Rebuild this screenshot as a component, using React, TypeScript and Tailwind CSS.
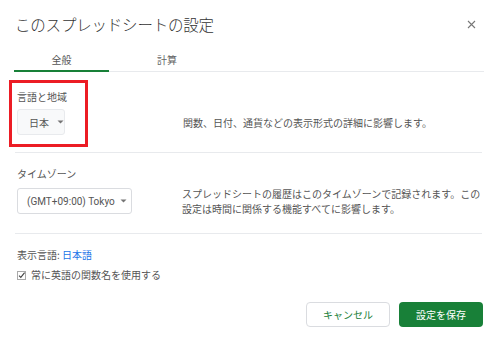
import React from "react";

const font = { fontFamily: '"Noto Sans CJK JP", Roboto, sans-serif' };

function Caret() {
  return (
    <svg width="7" height="4" viewBox="0 0 7 4" className="shrink-0">
      <path d="M0.5 0.5 L6.5 0.5 L3.5 3.5 Z" fill="#757575" />
    </svg>
  );
}

export default function App() {
  return (
    <div
      className="relative w-[497px] h-[339px] bg-white flex flex-col text-[#444] overflow-hidden"
      style={font}
    >
      {/* header */}
      <div className="h-[48px] flex items-center justify-between pl-[15px] pr-[21px]">
        <div className="text-[15.5px] leading-[20px] text-[#333] font-light tracking-[-0.2px]">
          このスプレッドシートの設定
        </div>
        <svg width="9" height="9" viewBox="0 0 9 9">
          <path d="M1 1 L8 8 M8 1 L1 8" stroke="#777" strokeWidth="1.1" />
        </svg>
      </div>

      {/* tabs */}
      <div className="mx-[14px] w-[470px] flex border-b border-[#e8eaed] h-[24px]">
        <div className="w-[95px] flex items-center justify-center text-[10px] text-[#555] border-b-2 border-[#188038] -mb-px">
          全般
        </div>
        <div className="w-[116px] flex items-center justify-center text-[10px] text-[#666]">
          計算
        </div>
      </div>

      {/* section 1 */}
      <div className="mx-[15px] w-[467px] pl-[2px] pt-[18px] pb-[17px] border-b border-[#e8eaed] flex flex-col gap-[5px]">
        <div className="text-[10px] leading-[14px] text-[#555]">言語と地域</div>
        <div className="flex items-center">
          <div className="w-[165px] shrink-0">
            <div className="w-[48px] h-[26px] rounded-[3px] border border-[#e8eaed] bg-[#f8f9fa] flex items-center pl-[11px] gap-[8px] text-[10px] text-[#555]">
              <span>日本</span>
              <Caret />
            </div>
          </div>
          <div className="text-[10px] leading-[15px] text-[#555] pl-[1px]">
            関数、日付、通貨などの表示形式の詳細に影響します。
          </div>
        </div>
      </div>

      {/* section 2 */}
      <div className="mx-[15px] w-[467px] pl-[2px] pt-[14px] pb-[17px] border-b border-[#e8eaed] flex flex-col gap-[5px]">
        <div className="text-[10px] leading-[14px] text-[#555]">タイムゾーン</div>
        <div className="flex items-center">
          <div className="w-[165px] shrink-0">
            <div
              className="w-[115px] h-[26px] rounded-[3px] border border-[#dadce0] bg-white flex items-center pl-[9px] gap-[5px] text-[10px] text-[#555] whitespace-nowrap"
              style={{ fontFamily: 'Roboto, "Noto Sans CJK JP", sans-serif' }}
            >
              <span>(GMT+09:00) Tokyo</span>
              <Caret />
            </div>
          </div>
          <div className="w-[302px] text-[10px] leading-[15px] text-[#555]">
            スプレッドシートの履歴はこのタイムゾーンで記録されます。この設定は時間に関係する機能すべてに影響します。
          </div>
        </div>
      </div>

      {/* footer */}
      <div className="mx-[15px] w-[468px] pl-[2px] pt-[14px] flex flex-col">
        <div className="text-[10px] leading-[14px] text-[#555]">
          表示言語: <span className="text-[#1a73e8]">日本語</span>
        </div>
        <div className="mt-[6px] flex items-center gap-[5px] text-[10px] leading-[14px] text-[#555]">
          <svg width="9" height="9" viewBox="0 0 9 9" className="shrink-0">
            <rect x="0.5" y="0.5" width="8" height="8" fill="none" stroke="#aaa" strokeWidth="1" />
            <path d="M2 4.6 L3.8 6.4 L7.6 1.6" fill="none" stroke="#444" strokeWidth="1.1" />
          </svg>
          <span>常に英語の関数名を使用する</span>
        </div>
        <div className="mt-[20px] flex justify-end gap-[9px]">
          <div className="w-[84px] h-[25px] rounded-[4px] border border-[#dadce0] bg-white flex items-center justify-center text-[10px] text-[#188038]">
            キャンセル
          </div>
          <div className="w-[84px] h-[25px] rounded-[4px] bg-[#188038] flex items-center justify-center text-[10px] text-white">
            設定を保存
          </div>
        </div>
      </div>

      {/* red highlight annotation */}
      <div className="absolute left-[9px] top-[80px] w-[79px] h-[67px] border-[3px] border-[#ec1c24]" />
    </div>
  );
}
